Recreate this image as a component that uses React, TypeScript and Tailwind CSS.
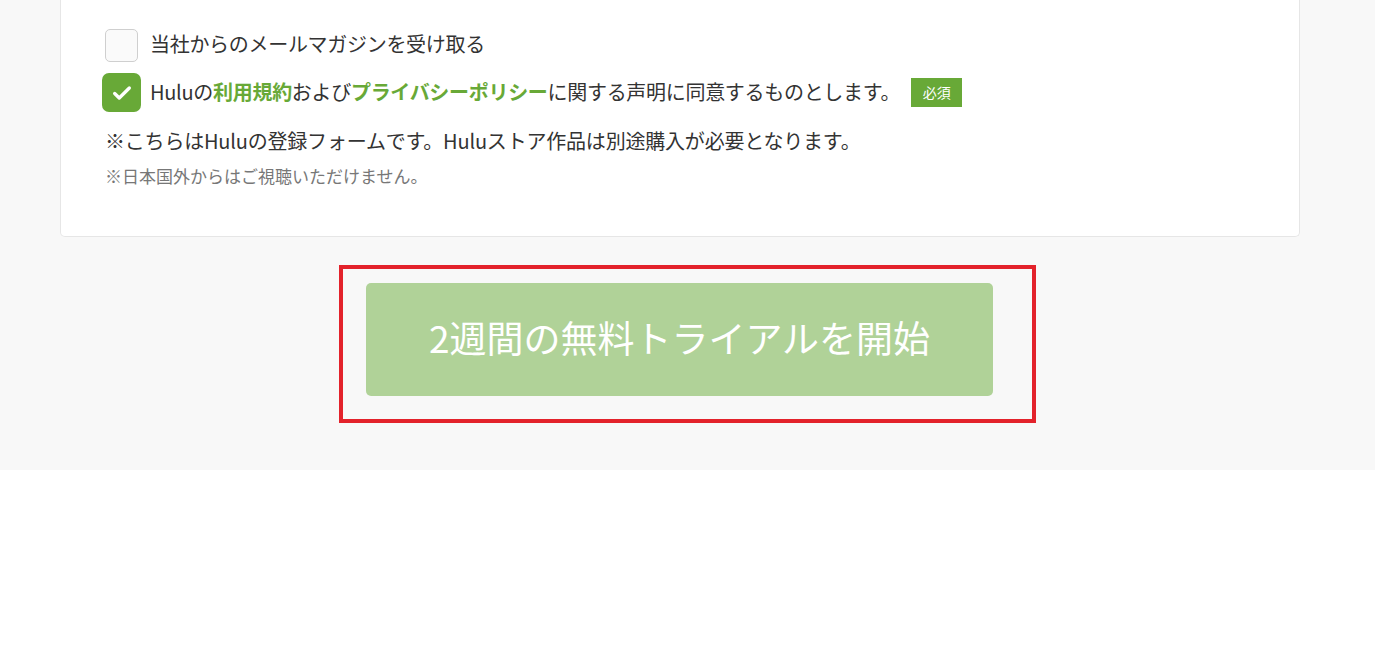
import React from "react";

const font = { fontFamily: '"Noto Sans CJK JP", "Noto Sans", sans-serif' };

export default function App() {
  return (
    <div className="min-h-screen bg-white text-[#333]" style={font}>
      <div className="bg-[#f8f8f8] pb-[47px]">
        <div className="w-[1360px] px-[60px]">
          <div className="bg-white border border-t-0 border-[#e6e6e6] rounded-b-[5px] pt-[29px] pb-[47px] pl-[44px]">
            <label className="flex items-center h-[33px] gap-[12px]">
              <span className="w-[33px] h-[33px] rounded-[5px] border border-[#cfcfcf] bg-[#fafafa] shrink-0" />
              <span className="text-[20px] leading-[30px] -mt-[4px] tracking-[-0.3px]">当社からのメールマガジンを受け取る</span>
            </label>

            <label className="flex items-center h-[39px] mt-[11px] -ml-[3px] gap-[9px]">
              <span className="w-[39px] h-[39px] rounded-[7px] bg-[#68a937] flex items-center justify-center shrink-0">
                <svg width="22" height="22" viewBox="0 0 24 24" fill="none">
                  <path d="M4 12.5l5 5L20 6.5" stroke="white" strokeWidth="3.6" strokeLinecap="round" strokeLinejoin="round" />
                </svg>
              </span>
              <span className="text-[20px] leading-[30px] -mt-[2px] tracking-[-0.3px]">
                Huluの<span className="font-bold text-[#68a937]">利用規約</span>および
                <span className="font-bold text-[#68a937]">プライバシーポリシー</span>
                に関する声明に同意するものとします。
              </span>
              <span className="ml-[2px] w-[51px] h-[29px] bg-[#68a937] text-white text-[14px] flex items-center justify-center">
                必須
              </span>
            </label>

            <p className="mt-[14px] text-[20px] leading-[30px] tracking-[-0.2px]">
              ※こちらはHuluの登録フォームです。Huluストア作品は別途購入が必要となります。
            </p>
            <p className="mt-[7px] text-[17px] leading-[26px] text-[#777]">
              ※日本国外からはご視聴いただけません。
            </p>
          </div>
        </div>

        <div className="flex justify-center mt-[28px]">
          <div className="w-[697px] h-[158px] border-[4px] border-[#e3222b] pt-[14px] pl-[23px] pr-[39px] pb-[23px]">
            <button className="w-full h-full rounded-[5px] bg-[#b0d298] text-white text-[37px] leading-none pb-[4px]">
              2週間の無料トライアルを開始
            </button>
          </div>
        </div>
      </div>
    </div>
  );
}
